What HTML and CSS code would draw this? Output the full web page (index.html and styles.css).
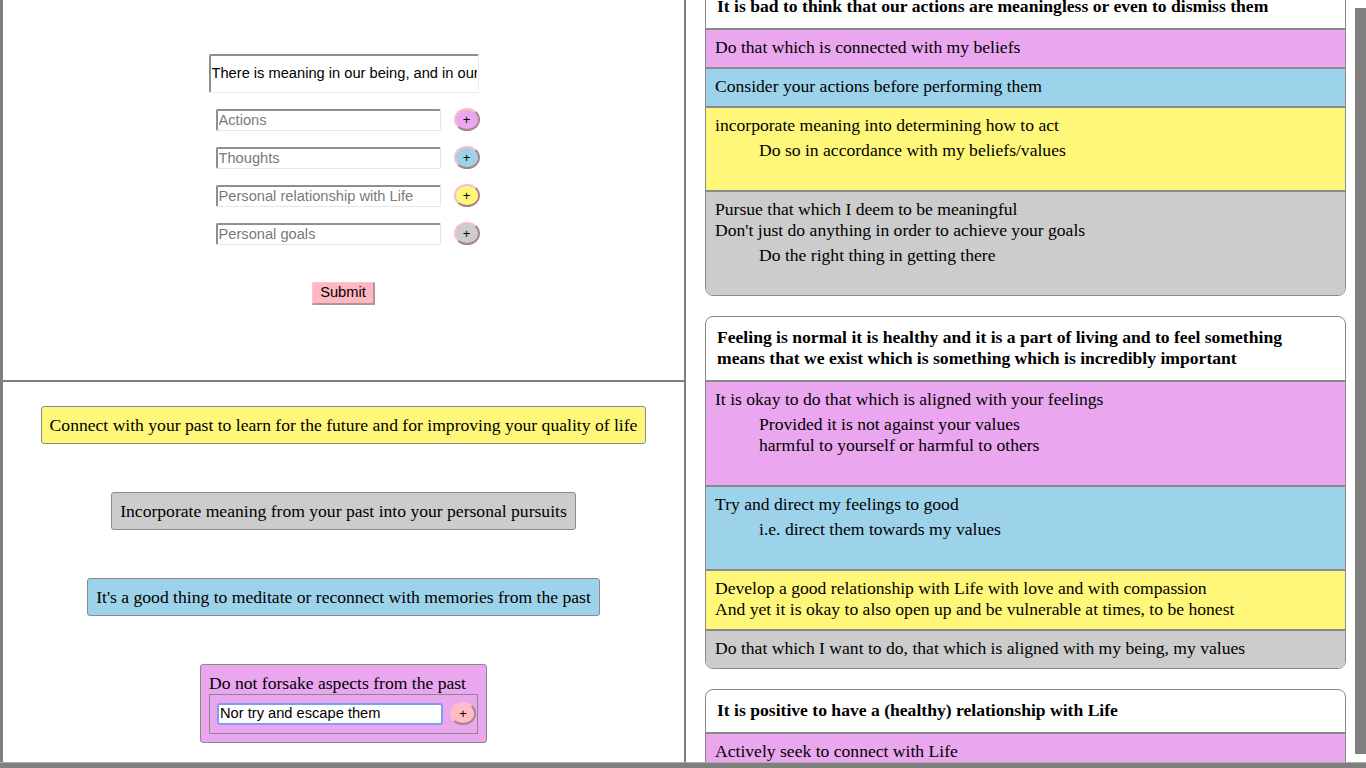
FILE: index.html
```html
<!DOCTYPE html>
<html lang="en">
<head>
<meta charset="utf-8">
<title>Meaning</title>
<link rel="stylesheet" href="styles.css">
</head>
<body>
<div class="app">
  <div class="left">
    <section class="form-panel">
      <input class="statement" type="text" value="There is meaning in our being, and in our lives">
      <div class="field-rows">
        <div class="field-row"><input class="field" type="text" placeholder="Actions"><button class="add add-pink">+</button></div>
        <div class="field-row"><input class="field" type="text" placeholder="Thoughts"><button class="add add-blue">+</button></div>
        <div class="field-row"><input class="field" type="text" placeholder="Personal relationship with Life"><button class="add add-yellow">+</button></div>
        <div class="field-row"><input class="field" type="text" placeholder="Personal goals"><button class="add add-gray">+</button></div>
      </div>
      <button class="submit">Submit</button>
    </section>
    <section class="notes-panel">
      <div class="note bg-yellow">Connect with your past to learn for the future and for improving your quality of life</div>
      <div class="note bg-gray">Incorporate meaning from your past into your personal pursuits</div>
      <div class="note bg-blue">It's a good thing to meditate or reconnect with memories from the past</div>
      <div class="note bg-pink">Do not forsake aspects from the past
        <div class="note-sub">
          <input class="field field-focus" type="text" value="Nor try and escape them">
          <button class="add add-light">+</button>
        </div>
      </div>
    </section>
  </div>
  <div class="right">
    <div class="cards">
      <div class="card">
        <div class="card-head">It is bad to think that our actions are meaningless or even to dismiss them</div>
        <div class="row bg-pink">Do that which is connected with my beliefs</div>
        <div class="row bg-blue">Consider your actions before performing them</div>
        <div class="row bg-yellow">incorporate meaning into determining how to act
          <div class="sub">Do so in accordance with my beliefs/values</div>
        </div>
        <div class="row bg-gray">Pursue that which I deem to be meaningful<br>Don't just do anything in order to achieve your goals
          <div class="sub">Do the right thing in getting there</div>
        </div>
      </div>
      <div class="card">
        <div class="card-head">Feeling is normal it is healthy and it is a part of living and to feel something means that we exist which is something which is incredibly important</div>
        <div class="row bg-pink">It is okay to do that which is aligned with your feelings
          <div class="sub">Provided it is not against your values<br>harmful to yourself or harmful to others</div>
        </div>
        <div class="row bg-blue">Try and direct my feelings to good
          <div class="sub">i.e. direct them towards my values</div>
        </div>
        <div class="row bg-yellow">Develop a good relationship with Life with love and with compassion<br>And yet it is okay to also open up and be vulnerable at times, to be honest</div>
        <div class="row bg-gray">Do that which I want to do, that which is aligned with my being, my values</div>
      </div>
      <div class="card">
        <div class="card-head">It is positive to have a (healthy) relationship with Life</div>
        <div class="row bg-pink">Actively seek to connect with Life</div>
        <div class="row bg-blue">Spend time reflecting on what matters</div>
      </div>
    </div>
    <div class="vscroll"><div class="thumb"></div></div>
  </div>
</div>
<div class="hbar"></div>
</body>
</html>
```

FILE: styles.css
```css
html, body {
  margin: 0;
  padding: 0;
  height: 768px;
  overflow: hidden;
  background: #ffffff;
  font-family: "Liberation Serif", "Times New Roman", serif;
  color: #000;
}

.app {
  display: flex;
  height: 762px;
}

.left {
  width: 686px;
  flex: none;
  box-sizing: border-box;
  border-left: 3px solid #808080;
  border-right: 2px solid #808080;
  display: flex;
  flex-direction: column;
}

.form-panel {
  height: 382px;
  flex: none;
  box-sizing: border-box;
  border-bottom: 2px solid #808080;
  display: flex;
  flex-direction: column;
  align-items: center;
  padding-top: 54px;
}

input, button {
  font-family: "Liberation Sans", Arial, sans-serif;
  font-size: 14.67px;
  color: #000;
  margin: 0;
}

.statement {
  width: 270px;
  height: 39px;
  box-sizing: border-box;
  padding: 0 1px 2px;
  border-style: solid;
  border-width: 2px 1px 1px 2px;
  border-color: #8f8f8f #ececec #ececec #8f8f8f;
  border-radius: 2px;
  outline: none;
}

.field-rows {
  display: flex;
  flex-direction: column;
  gap: 15px;
  margin-top: 15px;
  margin-left: 8px;
}

.field-row {
  display: flex;
  align-items: center;
  gap: 13px;
}

.field {
  width: 225px;
  height: 22px;
  box-sizing: border-box;
  padding: 0 1px 1px;
  border-style: solid;
  border-width: 2px 1px 1px 2px;
  border-color: #8f8f8f #e6e6e6 #e6e6e6 #8f8f8f;
  border-radius: 2px;
  outline: none;
  background: #fff;
}

.field::placeholder {
  color: #7a7a7a;
}

.add {
  width: 26px;
  height: 23px;
  box-sizing: border-box;
  padding: 0;
  border-radius: 50%;
  border-style: solid;
  border-width: 2px;
  border-color: #f7bfca #a8858a #a8858a #f7bfca;
  font-size: 13px;
  line-height: 17px;
  text-align: center;
}

.add-pink { background: #eaa6ef; }
.add-blue { background: #9dd3ea; }
.add-yellow { background: #fff77a; }
.add-gray { background: #cccccc; }
.add-light { background: #ffbcc6; }

.submit {
  margin-top: 37px;
  width: 63px;
  height: 23px;
  box-sizing: border-box;
  padding: 0 0 1px;
  background: #ffb7c2;
  border-style: solid;
  border-width: 1px 2px 2px 1px;
  border-color: #ffc4cd #b3939a #b3939a #ffc4cd;
  border-radius: 1px;
  line-height: 17px;
}

.notes-panel {
  flex: 1;
  display: flex;
  flex-direction: column;
  align-items: center;
  gap: 48px;
  padding-top: 24px;
}

.note {
  box-sizing: border-box;
  padding: 8px;
  border: 1px solid #8a8a8a;
  border-radius: 3px;
  font-size: 17.6px;
  line-height: 20px;
  white-space: nowrap;
}

.note-sub {
  display: flex;
  align-items: center;
  gap: 7px;
  margin-top: 1px;
  padding: 7px 1px 8px 7px;
  border: 1px solid #8a8a8a;
}

.field-focus {
  width: 226px;
  border: 2px solid #7d9ff0;
  border-radius: 3px;
  padding: 0 1px 1px;
}

.bg-pink { background: #eaa6ef; }
.bg-blue { background: #9dd3ea; }
.bg-yellow { background: #fff77a; }
.bg-gray { background: #cccccc; }

.right {
  flex: 1;
  display: flex;
  overflow: hidden;
}

.cards {
  flex: 1;
  display: flex;
  flex-direction: column;
  gap: 20px;
  padding: 0 9px 0 19px;
  margin-top: -15px;
  min-width: 0;
}

.card {
  flex: none;
  border: 1px solid #8a8a8a;
  border-radius: 8px;
  overflow: hidden;
  font-size: 17.6px;
  line-height: 21px;
  background: #fff;
}

.card-head {
  font-weight: bold;
  padding: 10px 12px 11px 11px;
}

.row {
  border-top: 2px solid #8a8a8a;
  padding: 7px 9px 9px;
}

.sub {
  padding: 4px 0 20px 44px;
}

.vscroll {
  width: 11px;
  flex: none;
  padding-top: 8px;
}

.thumb {
  height: 746px;
  background: #808080;
}

.hbar {
  height: 6px;
  box-sizing: border-box;
  border-top: 1px solid #ababab;
  background: #808080;
}
```
